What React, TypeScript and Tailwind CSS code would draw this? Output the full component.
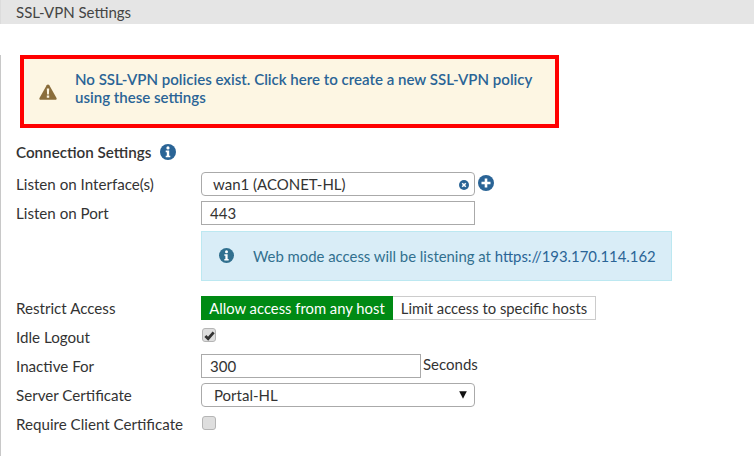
import React from "react";

const InfoIcon = ({ className }: { className: string }) => (
  <svg viewBox="0 0 16 16" className={className}>
    <circle cx="8" cy="8" r="8" fill="currentColor" />
    <circle cx="8" cy="3.9" r="1.6" fill="#fff" />
    <path d="M5.7 6.6h3.5v5.1h1.1v1.6H5.7v-1.6h1.1V8.2H5.7z" fill="#fff" />
  </svg>
);

const Row = ({ label, className, children }: { label: string; className: string; children: React.ReactNode }) => (
  <div className={`flex ${className}`}>
    <div className="w-[185px] shrink-0 h-6 leading-[25px] text-[15.15px]">{label}</div>
    {children}
  </div>
);

const Checkbox = ({ checked, className }: { checked?: boolean; className: string }) => (
  <div className={`w-[14px] h-[14px] ml-px rounded-[3px] border border-[#b5b5b5] bg-[#dedede] flex items-center justify-center ${className}`}>
    {checked && (
      <svg viewBox="0 0 12 12" className="w-[11px] h-[11px]">
        <path d="M1.5 6.5l3 3 6-7" fill="none" stroke="#333" strokeWidth="3" />
      </svg>
    )}
  </div>
);

export default function App() {
  return (
    <div className="w-[754px] h-[456px] overflow-hidden bg-white text-[15px] leading-[24px] text-[#333] font-['Lato',sans-serif]">
      <div className="h-6 bg-[#e5e5e5] pl-[15px] text-[#444] leading-[24px] border-l border-[#dcdcdc]">SSL-VPN Settings</div>
      <div className="h-[432px] border-l border-[#c8c8c8] pl-[15px]">
        <div className="mt-[31px] ml-1 w-[539px] h-[73px] border-4 border-[#ff0000] bg-[#fdf6e3] flex items-center">
          <svg viewBox="0 0 18 16" className="w-[18px] h-4 ml-[15px] mt-px shrink-0">
            <path d="M9 0.5c.6 0 1 .3 1.3.8l7.2 12.6c.5.9-.1 1.9-1.1 1.9H1.6c-1 0-1.6-1-1.1-1.9L7.7 1.3C8 .8 8.400 .5 9 .5z" fill="#8a6d3b" />
            <path d="M7.800 4.500h2.400l-.3 6H8.100z M7.800 11.500h2.400v2.200H7.800z" fill="#fdf6e3" />
          </svg>
          <div className="ml-[18px] mb-2 w-[480px] text-[#2a6496] font-semibold text-[15.05px] leading-[18px]">
            No SSL-VPN policies exist. Click here to create a new SSL-VPN policy using these settings
          </div>
        </div>
        <div className="mt-3 flex items-center h-6 pb-px font-semibold text-[15.2px] text-[#333]">
          Connection Settings
          <InfoIcon className="w-4 h-4 ml-[9px] text-[#2a6496]" />
        </div>
        <Row label="Listen on Interface(s)" className="mt-2">
          <div className="w-[274px] h-6 rounded-[4px] border border-[#aaa] pl-[11px] pr-[5px] flex items-center justify-between">
            <span>wan1 (ACONET-HL)</span>
            <svg viewBox="0 0 10 10" className="w-[10px] h-[10px] mt-px">
              <circle cx="5" cy="5" r="5" fill="#2a6496" />
              <path d="M3.200 3.200l3.600 3.600M6.800 3.200l-3.600 3.600" stroke="#fff" strokeWidth="1.500" />
            </svg>
          </div>
          <svg viewBox="0 0 16 16" className="w-4 h-4 ml-[3px] mt-[3px]">
            <circle cx="8" cy="8" r="8" fill="#2a6496" />
            <path d="M8 3.500v9M3.500 8h9" stroke="#fff" strokeWidth="2.600" />
          </svg>
        </Row>
        <Row label="Listen on Port" className="mt-[5px]">
          <div className="w-[274px] h-6 border border-[#aaa] pl-2 leading-[23px]">443</div>
        </Row>
        <div className="mt-[6px] ml-[185px] w-[471px] h-[50px] bg-[#d9edf7] border border-[#bce8f1] flex items-center text-[#31708f] text-[14.88px]">
          <InfoIcon className="w-[15px] h-[15px] ml-[17px] mb-0.5 text-[#31708f]" />
          <span className="ml-[19px]">
            Web mode access will be listening at <span className="text-[#2a6496]">https://193.170.114.162</span>
          </span>
        </div>
        <Row label="Restrict Access" className="mt-[15px]">
          <div className="w-[192px] h-6 bg-[#008a14] text-white text-center text-[14.8px]">Allow access from any host</div>
          <div className="w-[203px] h-6 border border-[#ccc] border-l-0 text-center text-[14.8px] leading-[22px]">Limit access to specific hosts</div>
        </Row>
        <Row label="Idle Logout" className="mt-[5px] h-6 items-center">
          <Checkbox checked className="-mt-1" />
        </Row>
        <Row label="Inactive For" className="mt-[5px]">
          <div className="w-[220px] h-6 border border-[#aaa] pl-2 leading-[23px]">300</div>
          <div className="ml-[2px] -mt-[2px]">Seconds</div>
        </Row>
        <Row label="Server Certificate" className="mt-[5px]">
          <div className="w-[274px] h-6 rounded-[4px] border border-[#aaa] pl-3 pr-[7px] flex items-center justify-between">
            <span>Portal-HL</span>
            <svg viewBox="0 0 8 8" className="w-2 h-2">
              <path d="M0.200 0.300h7.600L4 7.700z" fill="#111" />
            </svg>
          </div>
        </Row>
        <Row label="Require Client Certificate" className="mt-[5px] h-6 items-center">
          <Checkbox className="-mt-[2px]" />
        </Row>
      </div>
    </div>
  );
}
